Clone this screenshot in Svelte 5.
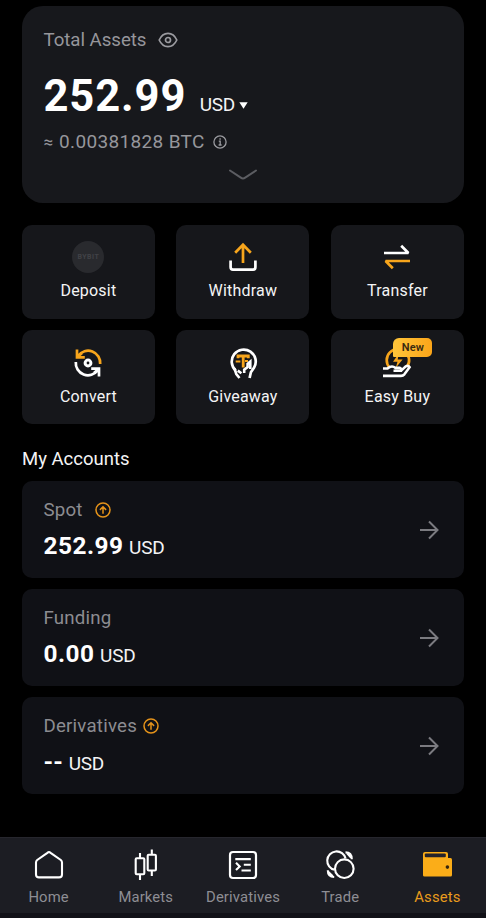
<script lang="ts">
    type Account = { name: string; value: string; earn?: boolean; gap?: number };

    const actions = ["Deposit", "Withdraw", "Transfer", "Convert", "Giveaway", "Easy Buy"];

    const accounts: Account[] = [
        { name: "Spot", value: "252.99", earn: true, gap: 12 },
        { name: "Funding", value: "0.00" },
        { name: "Derivatives", value: "--", earn: true, gap: 6 },
    ];

    const tabs = ["Home", "Markets", "Derivatives", "Trade", "Assets"];

    let activeTab = $state("Assets");
</script>

<div class="screen">
    <section class="total">
        <div class="total-label">
            <span>Total Assets</span>
            <svg width="20" height="16" viewBox="0 0 20 16" fill="none" stroke="#9b9ba0" stroke-width="1.7">
                <path d="M1.2 8C3.2 3.5 6.2 1.4 10 1.4S16.8 3.5 18.8 8C16.8 12.5 13.8 14.6 10 14.6S3.2 12.5 1.2 8Z" />
                <circle cx="10" cy="8" r="2.5" />
            </svg>
        </div>
        <div class="total-value">
            <strong>252.99</strong>
            <button class="currency">
                USD
                <svg width="9" height="7" viewBox="0 0 9 7"><path d="M.3.3h8.4L4.5 6.8Z" fill="#fff" /></svg>
            </button>
        </div>
        <div class="total-btc">
            <span class="approx">≈</span>
            <span class="btc">0.00381828 BTC</span>
            <svg width="14" height="14" viewBox="0 0 14 14" fill="none" stroke="#9b9ba0" stroke-width="1.3">
                <circle cx="7" cy="7" r="6.1" />
                <path d="M5.8 6.2H7.2V10M5.6 10H8.6M6.4 4h1.4" />
            </svg>
        </div>
        <svg class="expand" width="30" height="12" viewBox="0 0 30 12" fill="none" stroke="#5c5d62" stroke-width="2" stroke-linecap="round">
            <path d="M2 1.5 12.8 8.7Q15 10.1 17.2 8.7L28 1.5" />
        </svg>
    </section>

    <section class="actions">
        {#each actions as action}
            <button class="action">
                <span class="action-icon">
                    {#if action === "Deposit"}
                        <span class="coin">BYBIT</span>
                    {:else}
                        <svg width="32" height="32" viewBox="0 0 32 32" fill="none" stroke="#fff" stroke-width="2.7">
                            {#if action === "Withdraw"}
                                <path d="M3.6 19.5V26Q3.6 28.6 6 28.6H26Q28.4 28.6 28.4 26V19.5" />
                                <path d="M16 22V4M8.2 11.8 16 3.8 23.8 11.8" stroke="#f7a51c" />
                            {:else if action === "Transfer"}
                                <path d="M3 12H27.4L20.2 4.8" stroke-linejoin="bevel" />
                                <path d="M29 20H4.6L11.8 27.2" stroke="#f7a51c" stroke-linejoin="bevel" />
                            {:else if action === "Convert"}
                                <path d="M28.2 17A12.2 12.2 0 0 0 6.2 8.7M5 2.5V10.4H12.8M5 10.4 10 6" stroke="#f7a51c" />
                                <path d="M3.8 15A12.2 12.2 0 0 0 25.8 23.3M19.2 21.6H27V29.5M27 21.6 22 26" />
                                <circle cx="16" cy="16" r="2.9" stroke-width="3" />
                            {:else if action === "Giveaway"}
                                <path d="M11 11.2V9H21.3V11.2M16.2 9V20.5" stroke="#f7a51c" stroke-width="2.8" />
                                <path d="M8.7 14.5H13.4M18 14H21" stroke="#f7a51c" stroke-width="1.8" />
                                <path d="M8.7 23.5A12 12 0 1 1 27.1 20.6L23.9 25.2 22.6 31" />
                                <path d="M7.5 21.5 9.3 27 12.5 31M10.8 23.6 14.4 26.2M17.2 26V22.6L20.6 20V16.8L23.3 14.5V22" stroke-width="2.6" />
                            {:else if action === "Easy Buy"}
                                <path d="M8.4 20.5A11.2 11.2 0 1 1 26.2 19.5" stroke="#f7a51c" />
                                <path d="M17.8 6.5 12 14.8H16.5L14.8 20.8 21.6 12.5H16.7Z" fill="#f7a51c" stroke="none" />
                                <path d="M2 21.5H6.5C9.5 18.9 12.4 19.2 14.5 20.9H18.5Q20.7 21.2 20 23.8H12.5M20.2 23.6 24.8 19.3Q27.3 17.9 28.6 20.2L23.4 27.3Q22 28.9 20 28.9H2" stroke-width="2.6" />
                            {/if}
                        </svg>
                    {/if}
                    {#if action === "Easy Buy"}<span class="badge">New</span>{/if}
                </span>
                <span class="action-label">{action}</span>
            </button>
        {/each}
    </section>

    <h2>My Accounts</h2>

    <section class="accounts">
        {#each accounts as account}
            <button class="account">
                <span class="account-info">
                    <span class="account-name">
                        {account.name}
                        {#if account.earn}
                            <svg style="margin-left: {account.gap}px" width="16" height="16" viewBox="0 0 16 16" fill="none" stroke="#e5931a" stroke-width="1.5">
                                <circle cx="8" cy="8" r="7" />
                                <path d="M8 11.8V4.8M4.9 7.9 8 4.8 11.1 7.9" />
                            </svg>
                        {/if}
                    </span>
                    <span class="account-value">
                        <strong class:empty={account.value === "--"}>{account.value}</strong>
                        <span>USD</span>
                    </span>
                </span>
                <svg width="20" height="20" viewBox="0 0 20 20" fill="none" stroke="#7b7b80" stroke-width="2">
                    <path d="M1 10H18M10 1.5 18.5 10 10 18.5" />
                </svg>
            </button>
        {/each}
    </section>

    <nav>
        {#each tabs as tab}
            <button class="tab" class:active={activeTab === tab} onclick={() => (activeTab = tab)}>
                <svg width="32" height="32" viewBox="0 0 32 32" fill="none" stroke="#fff" stroke-width="2.1">
                    {#if tab === "Home"}
                        <path d="M14.4 3.8Q16 2.5 17.6 3.8L27.8 11Q29 12 29 13.4V25.5Q29 28.4 26 28.4H6Q3 28.4 3 25.5V13.4Q3 12 4.2 11Z" />
                    {:else if tab === "Markets"}
                        <rect x="5.7" y="9.3" width="8.6" height="16" rx="1" />
                        <rect x="17.7" y="5.8" width="8.2" height="15.7" rx="1" />
                        <path d="M10 4V9.3M10 25.3V31M21.8 .5V5.8M21.8 21.5V27" />
                    {:else if tab === "Derivatives"}
                        <rect x="3" y="3" width="26" height="26" rx="3" stroke-width="2.2" />
                        <path d="M8.3 10.1H23.8M16.8 15.8H23.8M14.5 21.5H23.8M9 13.8 12.7 17.4 9 21" />
                    {:else if tab === "Trade"}
                        <path d="M10.6 20.8A9.3 9.3 0 1 1 21.6 9.6M21.5 3.4Q27.8 3.6 27.8 10.2M23.2 4.2L27 8.6M3.8 21.2Q3.8 27.8 10.2 28M4.4 23L8.8 27.2" />
                        <circle cx="20.3" cy="19.7" r="9.3" />
                    {:else}
                        <rect x="2" y="3" width="25" height="24" rx="2" fill="#fbad18" stroke="none" />
                        <rect x="3.8" y="4.6" width="21" height="3.6" rx="1" fill="#25232a" stroke="none" />
                        <rect x="2" y="9" width="29" height="18.5" rx="1.5" fill="#fbad18" stroke="none" />
                        <circle cx="26.4" cy="18.1" r="1.8" fill="#35240d" stroke="none" />
                    {/if}
                </svg>
                <span>{tab}</span>
            </button>
        {/each}
    </nav>
</div>

<style>
    :global(body) {
        background: #000;
    }

    .screen {
        box-sizing: border-box;
        width: 486px;
        height: 918px;
        padding-top: 6px;
        display: flex;
        flex-direction: column;
        overflow: hidden;
        background: #000;
        color: #f4f4f5;
        font-family: Roboto, "Noto Sans", sans-serif;
    }

    button {
        margin: 0;
        padding: 0;
        border: none;
        background: none;
        color: inherit;
        font: inherit;
        cursor: pointer;
    }

    svg {
        display: block;
        flex: none;
    }

    /* Total balance */
    .total {
        box-sizing: border-box;
        height: 197px;
        margin: 0 22px;
        padding: 22px 21.5px 0;
        border-radius: 21px;
        background: #17181c;
        display: flex;
        flex-direction: column;
    }

    .total-label,
    .total-btc {
        display: flex;
        align-items: center;
        height: 24px;
        font-size: 18.7px;
        line-height: 24px;
        color: #96969b;
    }

    .total-label {
        letter-spacing: -0.05px;
    }

    .total-label svg {
        margin-left: 12px;
    }

    .total-value {
        display: flex;
        align-items: baseline;
        height: 50px;
        margin-top: 20px;
        line-height: 50px;
    }

    .total-value strong {
        font-size: 43.5px;
        letter-spacing: 0.9px;
        color: #fff;
    }

    .currency {
        display: flex;
        align-items: center;
        gap: 4px;
        margin-left: 13.5px;
        font-size: 19px;
        letter-spacing: -0.3px;
        line-height: 24px;
    }

    .total-btc {
        margin-top: 7.5px;
    }

    .btc {
        font-size: 19px;
        letter-spacing: 0.35px;
    }

    .approx {
        width: 15.5px;
        font-size: 17px;
    }

    .total-btc svg {
        margin-left: 8px;
    }

    .expand {
        align-self: center;
        margin-top: 15px;
    }

    /* Action tiles */
    .actions {
        display: grid;
        grid-template-columns: repeat(3, 133px);
        grid-auto-rows: 94px;
        gap: 11.4px 21.5px;
        margin: 22px 21.9px 0;
    }

    .action {
        display: flex;
        flex-direction: column;
        align-items: center;
        border-radius: 10px;
        background: #16171b;
    }

    .action-icon {
        position: relative;
        display: flex;
        width: 32px;
        height: 32px;
        margin-top: 16.4px;
    }

    .coin {
        width: 32px;
        height: 32px;
        border-radius: 50%;
        background: #292a2e;
        color: #414247;
        font-size: 7px;
        font-weight: 700;
        line-height: 33px;
        letter-spacing: 0.5px;
        text-align: center;
    }

    .badge {
        position: absolute;
        top: -9px;
        left: 12px;
        width: 39px;
        height: 19px;
        border-radius: 6px 5px 5px 1px;
        background: linear-gradient(90deg, #ffc53a, #fba519);
        color: #3a2a10;
        font-size: 11px;
        font-weight: 600;
        line-height: 20px;
        text-align: center;
        letter-spacing: 0.2px;
    }

    .action-icon svg {
        width: 32px;
        height: 32px;
    }

    .action-label {
        margin-top: 8px;
        font-size: 16px;
        line-height: 20px;
        letter-spacing: 0.2px;
    }

    /* Accounts */
    h2 {
        margin: 22.6px 22px 0;
        font-size: 18.5px;
        font-weight: 400;
        line-height: 24px;
        letter-spacing: 0;
    }

    .accounts {
        display: grid;
        grid-auto-rows: 97px;
        gap: 11px;
        margin: 9.6px 22px 0;
    }

    .account {
        display: flex;
        align-items: center;
        justify-content: space-between;
        padding: 1px 25px 0 21.5px;
        border-radius: 10px;
        background: #101116;
        text-align: left;
    }

    .account-info {
        display: flex;
        flex-direction: column;
        gap: 11px;
    }

    .account-name {
        display: flex;
        align-items: center;
        font-size: 18.7px;
        line-height: 24px;
        letter-spacing: 0.2px;
        color: #8c8c91;
    }

    .account-value {
        display: flex;
        align-items: baseline;
        gap: 5.5px;
        font-size: 19px;
        line-height: 26px;
        letter-spacing: -0.2px;
    }

    .account-value strong {
        font-size: 24.4px;
        letter-spacing: 0.5px;
        color: #fff;
    }

    .account-value .empty {
        letter-spacing: 0.2px;
    }

    /* Bottom navigation */
    nav {
        display: grid;
        grid-template-columns: repeat(5, 1fr);
        box-sizing: border-box;
        height: 76px;
        margin-top: auto;
        margin-bottom: 5px;
        border-top: 1px solid #26262d;
        background: #1c1d23;
        box-shadow: 0 5px 0 #111117;
    }

    .tab {
        display: flex;
        flex-direction: column;
        align-items: center;
        padding-top: 11px;
        font-size: 14.8px;
        line-height: 20px;
        letter-spacing: 0.15px;
        color: #8e8e94;
    }

    .tab svg {
        width: 32px;
        height: 32px;
    }

    .tab span {
        margin-top: 6px;
    }

    .tab.active {
        color: #e99b1c;
    }
</style>
